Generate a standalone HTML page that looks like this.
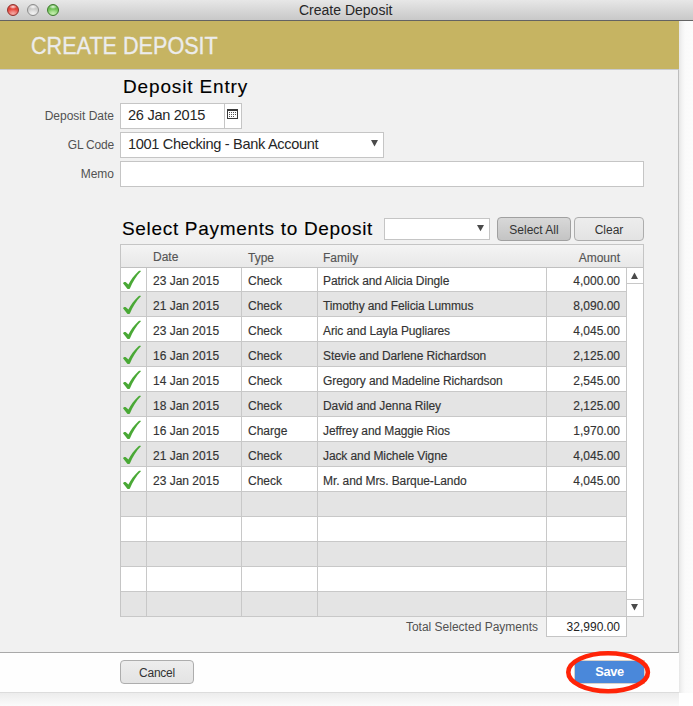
<!DOCTYPE html>
<html><head><meta charset="utf-8">
<style>
*{margin:0;padding:0;box-sizing:border-box;}
html,body{width:693px;height:706px;overflow:hidden;background:linear-gradient(180deg,#f6f6f6 0,#f6f6f6 692px,#ececec 693px,#fbfbfb 706px);font-family:"Liberation Sans",sans-serif;}
.abs{position:absolute;}
#titlebar{left:0;top:0;width:693px;height:21px;background:linear-gradient(#e7e7e7,#c8c8c8);border-bottom:1px solid #636363;}
.light{position:absolute;top:4px;width:12px;height:12px;border-radius:50%;}
#title{left:299px;top:2px;font-size:14px;color:#262626;white-space:nowrap;}
#gold{left:0;top:21px;width:679px;height:48px;background:#c6b462;}
#goldtxt{left:31px;top:33.3px;font-size:21.6px;color:#ececec;white-space:nowrap;transform:scaleY(1.07);transform-origin:0 0;-webkit-text-stroke:0.3px #ececec;}
#panel{left:0;top:69px;width:679px;height:584px;background:#f1f1f1;border-top:1px solid #c9cbcd;border-bottom:1px solid #a9a9a9;border-right:1px solid #bdbdbd;}
#footer{left:0;top:653px;width:679px;height:40px;background:#fefefe;border-bottom:1px solid #dcdcdc;}
#track{left:679px;top:21px;width:14px;height:672px;background:linear-gradient(90deg,#e6e6e6,#f3f3f3 3px,#fafafa 6px,#fcfcfc);}
#track2{left:679px;top:693px;width:14px;height:13px;background:#fff;}
.h19{font-size:19px;color:#000;white-space:nowrap;-webkit-text-stroke:0.12px #000;}
.lbl{font-size:12px;color:#525252;text-align:right;white-space:nowrap;}
.box{background:#fff;border:1px solid #c5c5c5;}
.tri{width:0;height:0;border-left:3.5px solid transparent;border-right:3.5px solid transparent;border-top:6px solid #444;}
.btn{border:1px solid #adadad;border-radius:4px;background:linear-gradient(#ededed,#e3e3e3);font-size:12px;color:#333;text-align:center;}
.cell{position:absolute;top:0;font-size:12px;color:#333;white-space:nowrap;-webkit-text-stroke-width:0.15px;}
.hl{position:absolute;left:121px;width:505px;height:1px;background:#c8c8c8;}
.hdr{color:#555;}
.fam{letter-spacing:-0.1px;}
</style></head><body>
<div id="titlebar" class="abs"></div>
<div class="light" style="left:7px;border:1px solid #8f2f2a;background:radial-gradient(ellipse 40% 22% at 50% 18%,rgba(255,240,240,0.95),rgba(255,255,255,0) 100%),radial-gradient(ellipse 60% 45% at 50% 85%,#f4aaa5,rgba(244,170,165,0) 100%),linear-gradient(#d43a32,#e8483e 50%,#ec6a60);"></div>
<div class="light" style="left:27px;border:1px solid #8c8c8c;background:radial-gradient(ellipse 40% 22% at 50% 18%,rgba(255,255,255,0.9),rgba(255,255,255,0) 100%),radial-gradient(ellipse 60% 45% at 50% 85%,#f2f2f2,rgba(242,242,242,0) 100%),linear-gradient(#c4c4c4,#d0d0d0 50%,#dedede);"></div>
<div class="light" style="left:47px;border:1px solid #3d7a2c;background:radial-gradient(ellipse 40% 22% at 50% 18%,rgba(240,255,235,0.95),rgba(255,255,255,0) 100%),radial-gradient(ellipse 60% 45% at 50% 85%,#c6efb0,rgba(198,239,176,0) 100%),linear-gradient(#58ae44,#76c65c 50%,#98d67e);"></div>
<div id="title" class="abs">Create Deposit</div>
<div id="gold" class="abs"></div>
<div id="goldtxt" class="abs">CREATE DEPOSIT</div>
<div id="track" class="abs"></div><div id="track2" class="abs"></div>
<div id="panel" class="abs"></div>
<div id="footer" class="abs"></div>

<div class="abs h19" style="left:123px;top:76px;letter-spacing:0.85px;">Deposit Entry</div>
<div class="abs lbl" style="left:0;width:114px;top:109px;">Deposit Date</div>
<div class="abs lbl" style="left:0;width:114px;top:138px;letter-spacing:-0.2px;">GL Code</div>
<div class="abs lbl" style="left:0;width:114px;top:167px;">Memo</div>

<div class="abs box" style="left:120px;top:103px;width:122px;height:26px;"></div>
<div class="abs" style="left:224px;top:104px;width:1px;height:24px;background:#c5c5c5;"></div>
<svg class="abs" style="left:227px;top:109px;" width="11" height="10" viewBox="0 0 11 10" shape-rendering="crispEdges"><rect x="0" y="0" width="11" height="10" fill="#3a3a3a"/><rect x="1" y="2" width="9" height="7" fill="#fff"/><g fill="#555"><rect x="2" y="3" width="1" height="1"/><rect x="4" y="3" width="1" height="1"/><rect x="6" y="3" width="1" height="1"/><rect x="8" y="3" width="1" height="1"/><rect x="2" y="5" width="1" height="1"/><rect x="4" y="5" width="1" height="1"/><rect x="6" y="5" width="1" height="1"/><rect x="8" y="5" width="1" height="1"/><rect x="2" y="7" width="1" height="1"/><rect x="4" y="7" width="1" height="1"/><rect x="6" y="7" width="1" height="1"/></g></svg>
<div class="abs" style="left:128px;top:106.5px;font-size:14.6px;letter-spacing:-0.3px;color:#262626;white-space:nowrap;">26 Jan 2015</div>
<div class="abs box" style="left:120px;top:132px;width:264px;height:26px;"></div>
<div class="abs" style="left:128px;top:135.5px;font-size:14.6px;letter-spacing:-0.33px;color:#262626;white-space:nowrap;">1001 Checking - Bank Account</div>
<svg class="abs" style="left:0;top:0;" width="500" height="240"><polygon points="371,140 378,140 374.5,146.5" fill="#4a4a4a"/></svg>
<div class="abs box" style="left:120px;top:161px;width:524px;height:26px;"></div>

<div class="abs h19" style="left:122px;top:218px;letter-spacing:0.68px;">Select Payments to Deposit</div>
<div class="abs box" style="left:384px;top:218px;width:106px;height:22px;"></div>
<svg class="abs" style="left:0;top:0;" width="500" height="240"><polygon points="477,225 484,225 480.5,231.2" fill="#4a4a4a"/></svg>

<div class="abs btn" style="left:497px;top:217px;width:74px;height:24px;line-height:24px;background:linear-gradient(#d8d8d8,#c4c4c4);border-color:#a0a0a0;">Select All</div>
<div class="abs btn" style="left:574px;top:217px;width:70px;height:24px;line-height:24px;">Clear</div>

<!-- table -->
<div class="abs" style="left:120px;top:244px;width:524px;height:373px;border:1px solid #c5c5c5;background:#fff;"></div>
<div class="abs" style="left:121px;top:245px;width:522px;height:23px;background:linear-gradient(#f4f4f4,#e8e8e8);border-bottom:1px solid #c0c0c0;"></div>
<div class="abs cell hdr" style="left:153px;top:250px;">Date</div>
<div class="abs cell hdr" style="left:248px;top:251px;">Type</div>
<div class="abs cell hdr" style="left:323px;top:251px;">Family</div>
<div class="abs cell hdr" style="left:546px;width:74px;text-align:right;top:251px;">Amount</div>
<div class="abs" style="left:121px;top:268px;width:505px;height:23px;background:#ffffff;"></div>
<div class="abs hl" style="top:291px;"></div>
<div class="abs" style="left:121px;top:292px;width:505px;height:24px;background:#e4e4e4;"></div>
<div class="abs hl" style="top:316px;"></div>
<div class="abs" style="left:121px;top:317px;width:505px;height:24px;background:#ffffff;"></div>
<div class="abs hl" style="top:341px;"></div>
<div class="abs" style="left:121px;top:342px;width:505px;height:24px;background:#e4e4e4;"></div>
<div class="abs hl" style="top:366px;"></div>
<div class="abs" style="left:121px;top:367px;width:505px;height:24px;background:#ffffff;"></div>
<div class="abs hl" style="top:391px;"></div>
<div class="abs" style="left:121px;top:392px;width:505px;height:24px;background:#e4e4e4;"></div>
<div class="abs hl" style="top:416px;"></div>
<div class="abs" style="left:121px;top:417px;width:505px;height:24px;background:#ffffff;"></div>
<div class="abs hl" style="top:441px;"></div>
<div class="abs" style="left:121px;top:442px;width:505px;height:24px;background:#e4e4e4;"></div>
<div class="abs hl" style="top:466px;"></div>
<div class="abs" style="left:121px;top:467px;width:505px;height:24px;background:#ffffff;"></div>
<div class="abs hl" style="top:491px;"></div>
<div class="abs" style="left:121px;top:492px;width:505px;height:24px;background:#e4e4e4;"></div>
<div class="abs hl" style="top:516px;"></div>
<div class="abs" style="left:121px;top:517px;width:505px;height:24px;background:#ffffff;"></div>
<div class="abs hl" style="top:541px;"></div>
<div class="abs" style="left:121px;top:542px;width:505px;height:24px;background:#e4e4e4;"></div>
<div class="abs hl" style="top:566px;"></div>
<div class="abs" style="left:121px;top:567px;width:505px;height:24px;background:#ffffff;"></div>
<div class="abs hl" style="top:591px;"></div>
<div class="abs" style="left:121px;top:592px;width:505px;height:24px;background:#e4e4e4;"></div>
<div class="abs hl" style="top:616px;"></div>
<svg class="abs" style="left:120px;top:267px;" width="26" height="25" viewBox="0 0 26 25"><path d="M3.0 16.2 C3.6 15.0 5.0 14.6 5.9 15.2 L8.4 17.6 C10.5 13.5 14 8.2 18.5 4.3 C19.5 3.6 20.9 3.7 20.9 4.2 C16.5 8.5 12.8 14.5 9.9 21.4 C9.3 22.2 7.6 22.2 7.1 21.5 Z" fill="#4aa936"/></svg>
<div class="abs cell" style="left:153px;top:274px;">23 Jan 2015</div>
<div class="abs cell" style="left:248px;top:274px;">Check</div>
<div class="abs cell fam" style="left:323px;top:274px;">Patrick and Alicia Dingle</div>
<div class="abs cell" style="left:546px;width:74px;text-align:right;top:274px;">4,000.00</div>
<svg class="abs" style="left:120px;top:292px;" width="26" height="25" viewBox="0 0 26 25"><path d="M3.0 16.2 C3.6 15.0 5.0 14.6 5.9 15.2 L8.4 17.6 C10.5 13.5 14 8.2 18.5 4.3 C19.5 3.6 20.9 3.7 20.9 4.2 C16.5 8.5 12.8 14.5 9.9 21.4 C9.3 22.2 7.6 22.2 7.1 21.5 Z" fill="#4aa936"/></svg>
<div class="abs cell" style="left:153px;top:299px;">21 Jan 2015</div>
<div class="abs cell" style="left:248px;top:299px;">Check</div>
<div class="abs cell fam" style="left:323px;top:299px;">Timothy and Felicia Lummus</div>
<div class="abs cell" style="left:546px;width:74px;text-align:right;top:299px;">8,090.00</div>
<svg class="abs" style="left:120px;top:317px;" width="26" height="25" viewBox="0 0 26 25"><path d="M3.0 16.2 C3.6 15.0 5.0 14.6 5.9 15.2 L8.4 17.6 C10.5 13.5 14 8.2 18.5 4.3 C19.5 3.6 20.9 3.7 20.9 4.2 C16.5 8.5 12.8 14.5 9.9 21.4 C9.3 22.2 7.6 22.2 7.1 21.5 Z" fill="#4aa936"/></svg>
<div class="abs cell" style="left:153px;top:324px;">23 Jan 2015</div>
<div class="abs cell" style="left:248px;top:324px;">Check</div>
<div class="abs cell fam" style="left:323px;top:324px;">Aric and Layla Pugliares</div>
<div class="abs cell" style="left:546px;width:74px;text-align:right;top:324px;">4,045.00</div>
<svg class="abs" style="left:120px;top:342px;" width="26" height="25" viewBox="0 0 26 25"><path d="M3.0 16.2 C3.6 15.0 5.0 14.6 5.9 15.2 L8.4 17.6 C10.5 13.5 14 8.2 18.5 4.3 C19.5 3.6 20.9 3.7 20.9 4.2 C16.5 8.5 12.8 14.5 9.9 21.4 C9.3 22.2 7.6 22.2 7.1 21.5 Z" fill="#4aa936"/></svg>
<div class="abs cell" style="left:153px;top:349px;">16 Jan 2015</div>
<div class="abs cell" style="left:248px;top:349px;">Check</div>
<div class="abs cell fam" style="left:323px;top:349px;">Stevie and Darlene Richardson</div>
<div class="abs cell" style="left:546px;width:74px;text-align:right;top:349px;">2,125.00</div>
<svg class="abs" style="left:120px;top:367px;" width="26" height="25" viewBox="0 0 26 25"><path d="M3.0 16.2 C3.6 15.0 5.0 14.6 5.9 15.2 L8.4 17.6 C10.5 13.5 14 8.2 18.5 4.3 C19.5 3.6 20.9 3.7 20.9 4.2 C16.5 8.5 12.8 14.5 9.9 21.4 C9.3 22.2 7.6 22.2 7.1 21.5 Z" fill="#4aa936"/></svg>
<div class="abs cell" style="left:153px;top:374px;">14 Jan 2015</div>
<div class="abs cell" style="left:248px;top:374px;">Check</div>
<div class="abs cell fam" style="left:323px;top:374px;">Gregory and Madeline Richardson</div>
<div class="abs cell" style="left:546px;width:74px;text-align:right;top:374px;">2,545.00</div>
<svg class="abs" style="left:120px;top:392px;" width="26" height="25" viewBox="0 0 26 25"><path d="M3.0 16.2 C3.6 15.0 5.0 14.6 5.9 15.2 L8.4 17.6 C10.5 13.5 14 8.2 18.5 4.3 C19.5 3.6 20.9 3.7 20.9 4.2 C16.5 8.5 12.8 14.5 9.9 21.4 C9.3 22.2 7.6 22.2 7.1 21.5 Z" fill="#4aa936"/></svg>
<div class="abs cell" style="left:153px;top:399px;">18 Jan 2015</div>
<div class="abs cell" style="left:248px;top:399px;">Check</div>
<div class="abs cell fam" style="left:323px;top:399px;">David and Jenna Riley</div>
<div class="abs cell" style="left:546px;width:74px;text-align:right;top:399px;">2,125.00</div>
<svg class="abs" style="left:120px;top:417px;" width="26" height="25" viewBox="0 0 26 25"><path d="M3.0 16.2 C3.6 15.0 5.0 14.6 5.9 15.2 L8.4 17.6 C10.5 13.5 14 8.2 18.5 4.3 C19.5 3.6 20.9 3.7 20.9 4.2 C16.5 8.5 12.8 14.5 9.9 21.4 C9.3 22.2 7.6 22.2 7.1 21.5 Z" fill="#4aa936"/></svg>
<div class="abs cell" style="left:153px;top:424px;">16 Jan 2015</div>
<div class="abs cell" style="left:248px;top:424px;">Charge</div>
<div class="abs cell fam" style="left:323px;top:424px;">Jeffrey and Maggie Rios</div>
<div class="abs cell" style="left:546px;width:74px;text-align:right;top:424px;">1,970.00</div>
<svg class="abs" style="left:120px;top:442px;" width="26" height="25" viewBox="0 0 26 25"><path d="M3.0 16.2 C3.6 15.0 5.0 14.6 5.9 15.2 L8.4 17.6 C10.5 13.5 14 8.2 18.5 4.3 C19.5 3.6 20.9 3.7 20.9 4.2 C16.5 8.5 12.8 14.5 9.9 21.4 C9.3 22.2 7.6 22.2 7.1 21.5 Z" fill="#4aa936"/></svg>
<div class="abs cell" style="left:153px;top:449px;">21 Jan 2015</div>
<div class="abs cell" style="left:248px;top:449px;">Check</div>
<div class="abs cell fam" style="left:323px;top:449px;">Jack and Michele Vigne</div>
<div class="abs cell" style="left:546px;width:74px;text-align:right;top:449px;">4,045.00</div>
<svg class="abs" style="left:120px;top:467px;" width="26" height="25" viewBox="0 0 26 25"><path d="M3.0 16.2 C3.6 15.0 5.0 14.6 5.9 15.2 L8.4 17.6 C10.5 13.5 14 8.2 18.5 4.3 C19.5 3.6 20.9 3.7 20.9 4.2 C16.5 8.5 12.8 14.5 9.9 21.4 C9.3 22.2 7.6 22.2 7.1 21.5 Z" fill="#4aa936"/></svg>
<div class="abs cell" style="left:153px;top:474px;">23 Jan 2015</div>
<div class="abs cell" style="left:248px;top:474px;">Check</div>
<div class="abs cell fam" style="left:323px;top:474px;">Mr. and Mrs. Barque-Lando</div>
<div class="abs cell" style="left:546px;width:74px;text-align:right;top:474px;">4,045.00</div>
<div class="abs" style="left:146px;top:268px;width:1px;height:348px;background:#c8c8c8;"></div>
<div class="abs" style="left:241px;top:268px;width:1px;height:348px;background:#c8c8c8;"></div>
<div class="abs" style="left:317px;top:268px;width:1px;height:348px;background:#c8c8c8;"></div>
<div class="abs" style="left:546px;top:268px;width:1px;height:348px;background:#c8c8c8;"></div>
<div class="abs" style="left:626px;top:268px;width:17px;height:348px;background:#fff;border-left:1px solid #c8c8c8;"></div>
<div class="abs" style="left:626px;top:283px;width:17px;height:1px;background:#c8c8c8;"></div>
<div class="abs" style="left:626px;top:599px;width:17px;height:1px;background:#c8c8c8;"></div>
<svg class="abs" style="left:626px;top:268px;" width="17" height="348" viewBox="626 268 17 348"><polygon points="631,279 638,279 634.5,272.5" fill="#4a4a4a"/><polygon points="631,604 638,604 634.5,610.5" fill="#4a4a4a"/></svg>

<div class="abs lbl" style="left:300px;width:238px;top:620px;">Total Selected Payments</div>
<div class="abs box" style="left:546px;top:616px;width:81px;height:21px;"></div>
<div class="abs" style="left:546px;width:74px;top:620px;font-size:12px;color:#222;text-align:right;">32,990.00</div>

<div class="abs btn" style="left:120px;top:660px;width:74px;height:24px;line-height:24px;letter-spacing:-0.25px;">Cancel</div>
<div class="abs" style="left:574px;top:660px;width:71px;height:24px;background:#4a88da;color:#fff;font-weight:bold;font-size:12.8px;letter-spacing:-0.3px;text-align:center;line-height:22px;border:1px solid #d6d2cc;padding-left:0px;">Save</div>
<svg class="abs" style="left:0;top:0;" width="693" height="706"><ellipse cx="608.1" cy="672.2" rx="39.8" ry="19" fill="none" stroke="#ff2408" stroke-width="4.6"/></svg>
</body></html>
